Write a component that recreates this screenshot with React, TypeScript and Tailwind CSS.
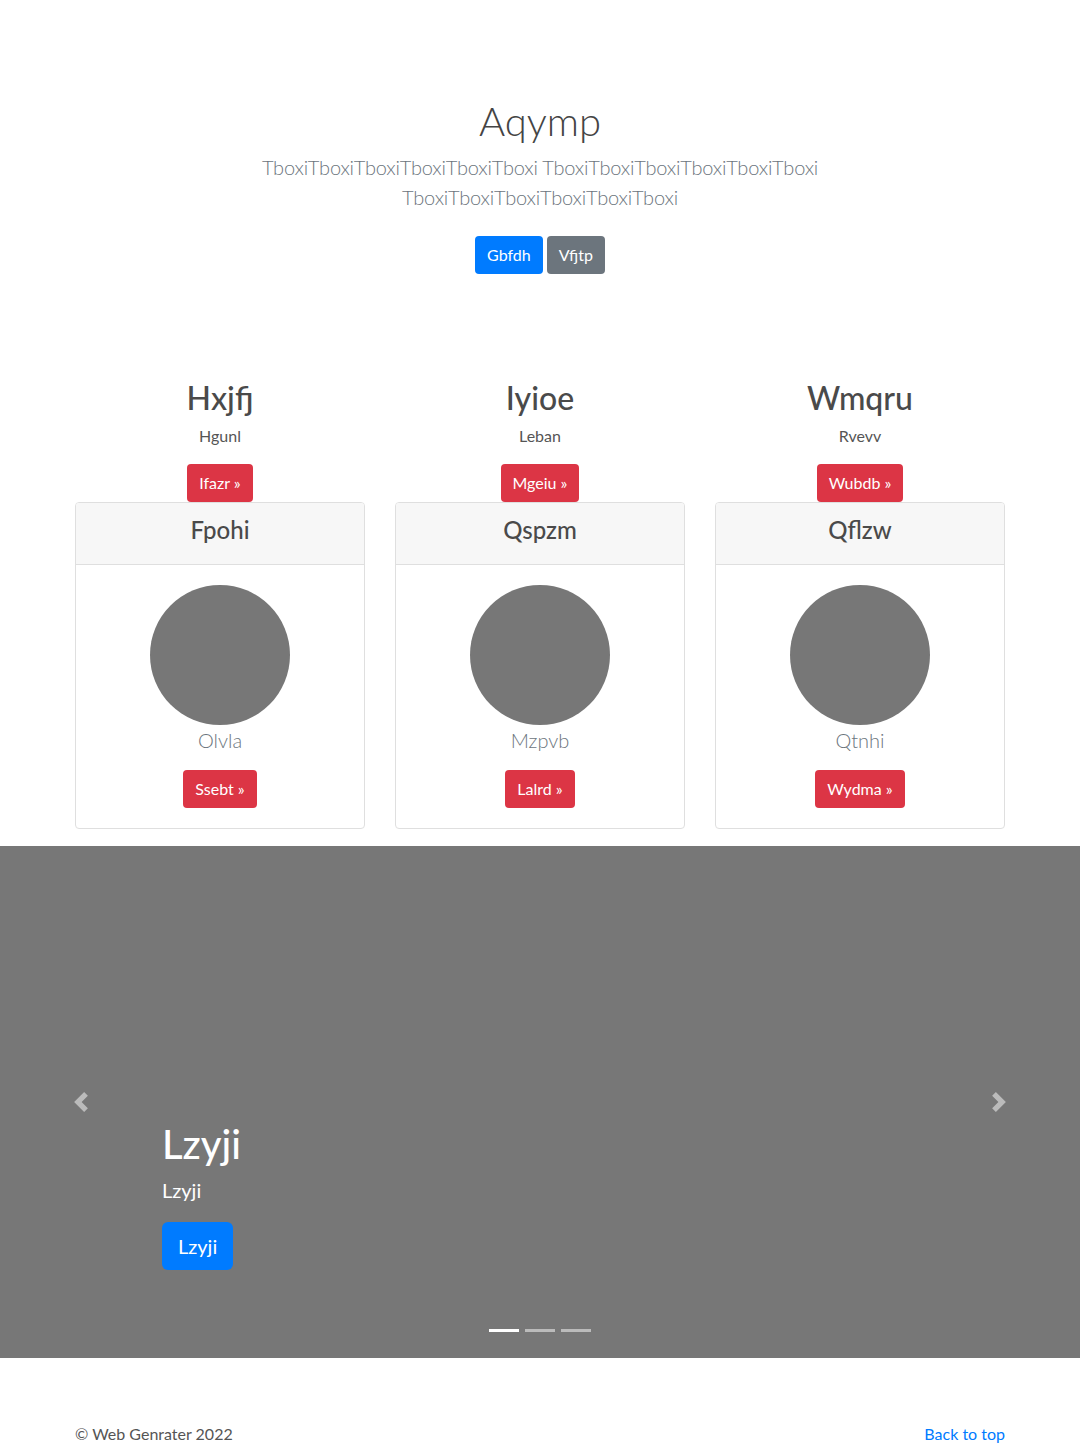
const features = [
  { title: 'Hxjfj', sub: 'Hgunl', cta: 'Ifazr', card: 'Fpohi', name: 'Olvla', action: 'Ssebt' },
  { title: 'Iyioe', sub: 'Leban', cta: 'Mgeiu', card: 'Qspzm', name: 'Mzpvb', action: 'Lalrd' },
  { title: 'Wmqru', sub: 'Rvevv', cta: 'Wubdb', card: 'Qflzw', name: 'Qtnhi', action: 'Wydma' },
];

const ControlIcon = ({ dir }: { dir: 'prev' | 'next' }) => (
  <svg width="20" height="20" viewBox="0 0 8 8" fill="#ffffff" fillOpacity="0.5">
    {dir === 'prev' ? (
      <path d="M5.25 0l-4 4 4 4 1.5-1.5-2.5-2.5 2.5-2.5-1.5-1.5z" />
    ) : (
      <path d="M2.75 0l-1.5 1.5 2.5 2.5-2.5 2.5 1.5 1.5 4-4-4-4z" />
    )}
  </svg>
);

const App = () => {
  return (
    <div className="min-h-screen bg-white text-[#555] font-['Segoe_UI','Lato',sans-serif] text-base leading-6">
      {/* jumbotron */}
      <section className="pt-[97px] text-center">
        <div className="mx-auto max-w-[640px] px-[15px]">
          <h1 className="text-[40px] font-light leading-[48px] text-[#444] mb-[7px]">Aqymp</h1>
          <p className="text-[20px] font-light leading-[30px] text-[#6c757d] tracking-[-0.2px]">
            TboxiTboxiTboxiTboxiTboxiTboxi TboxiTboxiTboxiTboxiTboxiTboxi TboxiTboxiTboxiTboxiTboxiTboxi
          </p>
          <div className="mt-[24px] flex justify-center gap-1">
            <a className="px-3 py-[7px] leading-6 rounded-[4px] bg-[#007bff] text-white">Gbfdh</a>
            <a className="px-3 py-[7px] leading-6 rounded-[4px] bg-[#6c757d] text-white">Vfjtp</a>
          </div>
        </div>
      </section>

      {/* feature columns */}
      <section className="mt-[105px] mx-auto w-[960px] px-[15px]">
        <div className="grid grid-cols-3 gap-[30px]">
          {features.map((f) => (
            <div key={f.title} className="flex flex-col items-center text-center">
              <h2 className="text-[32px] font-medium leading-[38px] text-[#4a4a4a]">{f.title}</h2>
              <p className="mt-[7px] text-base leading-6">{f.sub}</p>
              <a className="mt-4 px-3 py-[7px] leading-6 rounded-[4px] bg-[#dc3545] text-white">
                {f.cta} »
              </a>
              <div className="w-full border border-[#dfdfdf] rounded-[4px] overflow-hidden">
                <div className="bg-[#f7f7f7] border-b border-[#dfdfdf] px-5 pt-3 pb-5">
                  <h4 className="text-[24px] font-medium leading-[29px] text-[#4a4a4a]">{f.card}</h4>
                </div>
                <div className="p-5 flex flex-col items-center">
                  <div className="w-[140px] h-[140px] rounded-full bg-[#777]" />
                  <p className="text-[20px] font-light leading-[30px] text-[#6c757d]">{f.name}</p>
                  <a className="mt-[15px] px-3 py-[7px] leading-6 rounded-[4px] bg-[#dc3545] text-white">
                    {f.action} »
                  </a>
                </div>
              </div>
            </div>
          ))}
        </div>
      </section>

      {/* carousel */}
      <section className="relative mt-[17px] h-[512px] bg-[#777] flex flex-col justify-end pl-[162px] pb-[88px] text-white">
        <h1 className="text-[40px] font-medium leading-[48px]">Lzyji</h1>
        <p className="mt-2 text-[20px] leading-[28px]">Lzyji</p>
        <div className="mt-[18px]">
          <a className="inline-block px-4 py-[9px] text-[20px] leading-[30px] rounded-[6px] bg-[#007bff] text-white">Lzyji</a>
        </div>
        <button className="absolute left-0 top-0 bottom-0 w-[162px] flex items-center justify-center">
          <ControlIcon dir="prev" />
        </button>
        <button className="absolute right-0 top-0 bottom-0 w-[162px] flex items-center justify-center">
          <ControlIcon dir="next" />
        </button>
        <ol className="absolute bottom-[26px] left-0 right-0 flex justify-center gap-[6px]">
          <li className="w-[30px] h-[3px] bg-white" />
          <li className="w-[30px] h-[3px] bg-white/50" />
          <li className="w-[30px] h-[3px] bg-white/50" />
        </ol>
      </section>

      {/* footer */}
      <footer className="mt-16 mx-auto w-[960px] px-[15px] pb-12 flex justify-between">
        <p>© Web Genrater 2022</p>
        <a className="text-[#007bff]">Back to top</a>
      </footer>
    </div>
  );
};

export default App;
